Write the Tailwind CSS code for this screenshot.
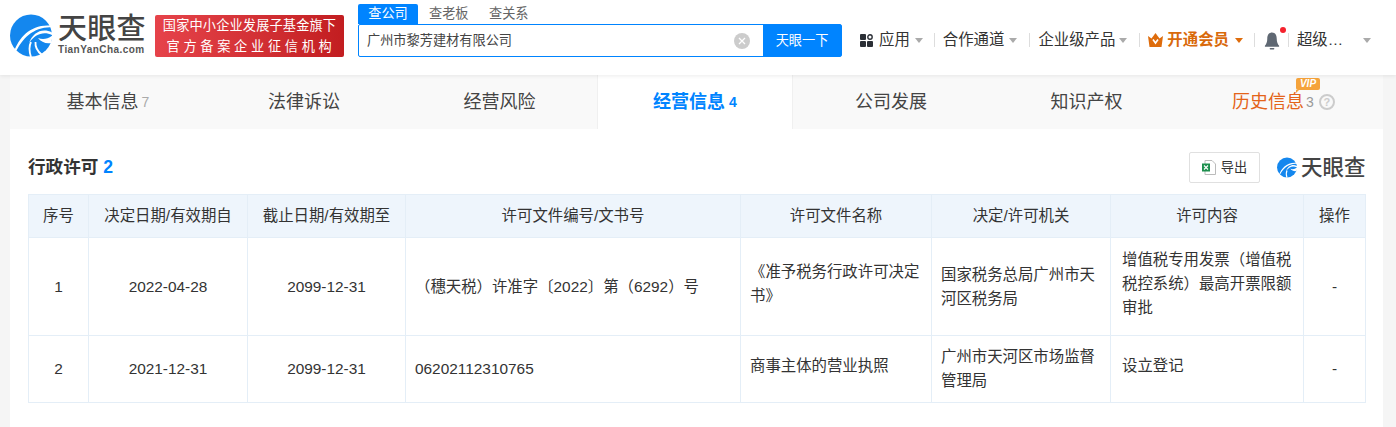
<!DOCTYPE html>
<html lang="zh-CN">
<head>
  <meta charset="UTF-8" />
  <title>行政许可</title>
  <script src="https://cdn.jsdelivr.net/npm/@tailwindcss/browser@4"></script>
</head>
<body class="bg-[#f5f5f5] h-[427px] overflow-hidden font-['Liberation_Sans','Noto_Sans_CJK_SC',sans-serif] text-[#333]">

  <!-- header -->
  <header class="relative z-10 h-[75px] bg-white flex pl-[10px] shadow-[0_1px_4px_rgba(0,0,0,0.08)]">
    <div class="flex mt-[14px] h-[44px]">
      <svg class="w-[42px] h-[43px]" viewBox="0 0 42 43">
        <circle cx="21" cy="21.5" r="21" fill="#1487ee"/>
        <path d="M4 38C9 23 22 9 43 12L43 13.5C25 12 12 24 5.5 39Z" fill="#fff"/>
        <path d="M19 29C23 18 33 13 43 19L43 21.5C34 16.5 25 20 19 29Z" fill="#fff"/>
        <path d="M28 24C33 26 38 25 43 21L41 29C36 30 31 28 28 24Z" fill="#fff"/>
        <path d="M21 43C19 37 19 32 21 28" fill="none" stroke="#fff" stroke-width="1.8"/>
        <path d="M32 41C27 37 25 33 25.5 28" fill="none" stroke="#fff" stroke-width="1.8"/>
      </svg>
      <div class="ml-[6px] w-[88px]">
        <div class="text-[29px] leading-[30px] font-medium text-[#444] tracking-[0.2px] whitespace-nowrap">天眼查</div>
        <div class="text-[10px] leading-[10px] mt-[1px] font-bold text-[#555] tracking-[0.45px] whitespace-nowrap">TianYanCha.com</div>
      </div>
    </div>
    <div class="ml-[9px] mt-[15px] w-[189px] h-[42px] rounded-[2px] bg-linear-to-r from-[#e6434a] to-[#c21d20] text-white text-center text-[13.2px] leading-[21px] whitespace-nowrap">
      <div class="tracking-[0.15px]">国家中小企业发展子基金旗下</div>
      <div class="tracking-[3.7px] pl-[3px]">官方备案企业征信机构</div>
    </div>

    <!-- search -->
    <div class="ml-[14px] mt-[4px] w-[484px]">
      <div class="flex h-[20px] text-[13.2px] leading-[20px] text-[#666]">
        <span class="w-[60px] bg-[#0084ff] text-white text-center rounded-t-[2px]">查公司</span>
        <span class="ml-[11px] w-[39px] text-center whitespace-nowrap">查老板</span>
        <span class="ml-[21px] w-[39px] text-center whitespace-nowrap">查关系</span>
      </div>
      <div class="flex h-[33px] border border-[#0084ff] rounded-[2px]">
        <div class="flex-1 flex items-center pl-[8px] pr-[13px] text-[13.2px]">
          <span class="flex-1 text-[#444]">广州市黎芳建材有限公司</span>
          <svg class="w-[16px] h-[16px]" viewBox="0 0 16 16">
            <circle cx="8" cy="8" r="8" fill="#ccc"/>
            <path d="M5 5L11 11M11 5L5 11" stroke="#fff" stroke-width="1.3"/>
          </svg>
        </div>
        <div class="w-[78px] bg-[#0084ff] text-white text-[13.2px] flex items-center justify-center">天眼一下</div>
      </div>
    </div>

    <!-- nav -->
    <nav class="ml-[18px] mt-[25px] h-[30px] flex items-center text-[15.4px] text-[#333] whitespace-nowrap">
      <svg class="w-[13px] h-[13px]" viewBox="0 0 13 13" fill="#2b2f36">
        <rect width="6" height="6" rx="1"/>
        <rect y="7" width="6" height="6" rx="1"/>
        <rect x="7" y="7" width="6" height="6" rx="1"/>
        <circle cx="10" cy="3" r="2.2" fill="none" stroke="#2b2f36" stroke-width="1.4"/>
      </svg>
      <span class="ml-[6px]">应用</span>
      <i class="ml-[5px] border-x-[4px] border-x-transparent border-t-[5px] border-t-[#aaa]"></i>
      <i class="ml-[11px] w-px h-[14px] bg-[#ddd]"></i>
      <span class="ml-[8px]">合作通道</span>
      <i class="ml-[5px] border-x-[4px] border-x-transparent border-t-[5px] border-t-[#aaa]"></i>
      <i class="ml-[12px] w-px h-[14px] bg-[#ddd]"></i>
      <span class="ml-[8px]">企业级产品</span>
      <i class="ml-[4px] border-x-[4px] border-x-transparent border-t-[5px] border-t-[#aaa]"></i>
      <i class="ml-[12px] w-px h-[14px] bg-[#ddd]"></i>
      <svg class="ml-[8px] w-[15px] h-[14px]" viewBox="0 0 15 14">
        <path d="M0 3L3.5 5.5L7.5 0L11.5 5.5L15 3L13.5 14H1.5Z" fill="#de6c0c"/>
        <path d="M5 6.5L7.5 10L10 6.5" fill="none" stroke="#fff" stroke-width="1.6"/>
      </svg>
      <span class="ml-[4px] font-bold text-[#d96a0b]">开通会员</span>
      <i class="ml-[6px] border-x-[4px] border-x-transparent border-t-[5px] border-t-[#de6c0c]"></i>
      <i class="ml-[11px] w-px h-[14px] bg-[#ddd]"></i>
      <span class="relative ml-[9px] w-[16px] h-[18px] mt-[2px]">
        <svg class="w-[16px] h-[18px]" viewBox="0 0 16 19" fill="#5f6873">
          <path d="M8 0.5C4.5 0.5 3 3.5 3 7C3 10.5 2 12.5 0.5 14.5V15.5H15.5V14.5C14 12.5 13 10.5 13 7C13 3.5 11.5 0.5 8 0.5Z"/>
          <rect x="5.5" y="17" width="5" height="1.6" rx="0.8"/>
        </svg>
        <i class="absolute -top-[5px] -right-[6px] w-[6px] h-[6px] rounded-full bg-[#f5222d]"></i>
      </span>
      <i class="ml-[8px] w-px h-[14px] bg-[#ddd]"></i>
      <span class="ml-[8px] w-[66px]">超级…</span>
      <i class="border-x-[4px] border-x-transparent border-t-[5px] border-t-[#aaa]"></i>
    </nav>
  </header>

  <main class="ml-[10px] w-[1373px] h-[352px] bg-white">
    <!-- tabs -->
    <div class="h-[54px] bg-[#f9f9f9] flex text-[18px] text-[#444] whitespace-nowrap">
      <div class="w-[196px] flex items-center justify-center">基本信息<span class="ml-[3px] text-[14px] text-[#aaa]">7</span></div>
      <div class="w-[196px] flex items-center justify-center">法律诉讼</div>
      <div class="w-[195px] flex items-center justify-center">经营风险</div>
      <div class="w-[196px] flex items-center justify-center bg-white border-x border-[#f0f0f0] font-bold text-[#0084ff]">经营信息<span class="ml-[4px] text-[14px] font-bold">4</span></div>
      <div class="w-[196px] flex items-center justify-center">公司发展</div>
      <div class="w-[195px] flex items-center justify-center">知识产权</div>
      <div class="relative w-[199px] flex items-center pl-[48px] text-[#e4641a]">
        历史信息<span class="ml-[2px] text-[14px] text-[#999]">3</span>
        <span class="ml-[5px] w-[16px] h-[16px] rounded-full border-2 border-[#ccc] text-[11px] leading-[12px] text-center font-bold text-[#ccc]">?</span>
        <span class="absolute left-[112px] top-[3px] w-[24px] h-[12px] rounded-[2px] bg-[#f5a33b] text-white text-[10px] leading-[12px] text-center font-bold italic">VIP<i class="absolute left-0 top-[12px] border-r-[3px] border-r-transparent border-t-[3px] border-t-[#f5a33b]"></i></span>
      </div>
    </div>

    <!-- section -->
    <div class="pl-[18px] pr-[18px]">
      <div class="h-[65px] flex items-center justify-between pt-[12px] w-[1337px]">
        <h2 class="text-[17.6px] font-bold text-[#333]">行政许可 <span class="text-[#0084ff]">2</span></h2>
        <div class="flex items-center">
          <div class="w-[71px] h-[31px] border border-[#e0e0e0] rounded-[2px] flex items-center justify-center text-[13.2px] text-[#333]">
            <svg class="w-[14px] h-[15px] mr-[5px]" viewBox="0 0 14 15">
              <path d="M3 0.5H10L13.5 4V14.5H3Z" fill="#fff" stroke="#bbb"/>
              <rect y="3.5" width="8" height="8" fill="#1d8f4e"/>
              <path d="M2 5.5L6 9.5M6 5.5L2 9.5" stroke="#fff" stroke-width="1.1"/>
            </svg>
            导出
          </div>
          <svg class="ml-[17px] w-[20px] h-[21px]" viewBox="0 0 42 43">
            <circle cx="21" cy="21.5" r="21" fill="#1487ee"/>
            <path d="M4 38C9 23 22 9 43 12L43 14C25 12 12 24 5.5 39Z" fill="#fff"/>
            <path d="M19 29C23 18 33 13 43 19L43 22C34 16.5 25 20 19 29Z" fill="#fff"/>
            <path d="M28 24C33 26 38 25 43 21L41 29C36 30 31 28 28 24Z" fill="#fff"/>
            <path d="M21 43C19 37 19 32 21 28" fill="none" stroke="#fff" stroke-width="2.4"/>
          </svg>
          <span class="ml-[4px] w-[64px] text-[21.5px] leading-[24px] font-medium text-[#444] whitespace-nowrap">天眼查</span>
        </div>
      </div>

      <table class="w-[1337px] table-fixed border-collapse text-[15.4px] leading-[24px] text-[#333]">
        <colgroup>
          <col class="w-[60px]"><col class="w-[159px]"><col class="w-[158px]"><col class="w-[335px]"><col class="w-[191px]"><col class="w-[179px]"><col class="w-[193px]"><col class="w-[62px]">
        </colgroup>
        <thead class="bg-[#eef5fc]">
          <tr class="h-[43px] text-center">
            <th class="font-normal border border-[#e4eef7]">序号</th>
            <th class="font-normal border border-[#e4eef7]">决定日期/有效期自</th>
            <th class="font-normal border border-[#e4eef7]">截止日期/有效期至</th>
            <th class="font-normal border border-[#e4eef7]">许可文件编号/文书号</th>
            <th class="font-normal border border-[#e4eef7]">许可文件名称</th>
            <th class="font-normal border border-[#e4eef7]">决定/许可机关</th>
            <th class="font-normal border border-[#e4eef7]">许可内容</th>
            <th class="font-normal border border-[#e4eef7]">操作</th>
          </tr>
        </thead>
        <tbody>
          <tr class="h-[98px]">
            <td class="text-center border border-[#e4eef7]">1</td>
            <td class="text-center border border-[#e4eef7]">2022-04-28</td>
            <td class="text-center border border-[#e4eef7]">2099-12-31</td>
            <td class="px-[9px] border border-[#e4eef7]">（穗天税）许准字〔2022〕第（6292）号</td>
            <td class="px-[9px] pb-[6px] border border-[#e4eef7]">《准予税务行政许可决定书》</td>
            <td class="px-[9px] border border-[#e4eef7]">国家税务总局广州市天河区税务局</td>
            <td class="px-[11px] pb-[6px] border border-[#e4eef7]">增值税专用发票（增值税税控系统）最高开票限额审批</td>
            <td class="text-center border border-[#e4eef7]">-</td>
          </tr>
          <tr class="h-[67px]">
            <td class="text-center border border-[#e4eef7]">2</td>
            <td class="text-center border border-[#e4eef7]">2021-12-31</td>
            <td class="text-center border border-[#e4eef7]">2099-12-31</td>
            <td class="px-[9px] border border-[#e4eef7]">06202112310765</td>
            <td class="px-[9px] pb-[6px] border border-[#e4eef7]">商事主体的营业执照</td>
            <td class="px-[9px] border border-[#e4eef7]">广州市天河区市场监督管理局</td>
            <td class="px-[11px] pb-[6px] border border-[#e4eef7]">设立登记</td>
            <td class="text-center border border-[#e4eef7]">-</td>
          </tr>
        </tbody>
      </table>
    </div>
  </main>

</body>
</html>
